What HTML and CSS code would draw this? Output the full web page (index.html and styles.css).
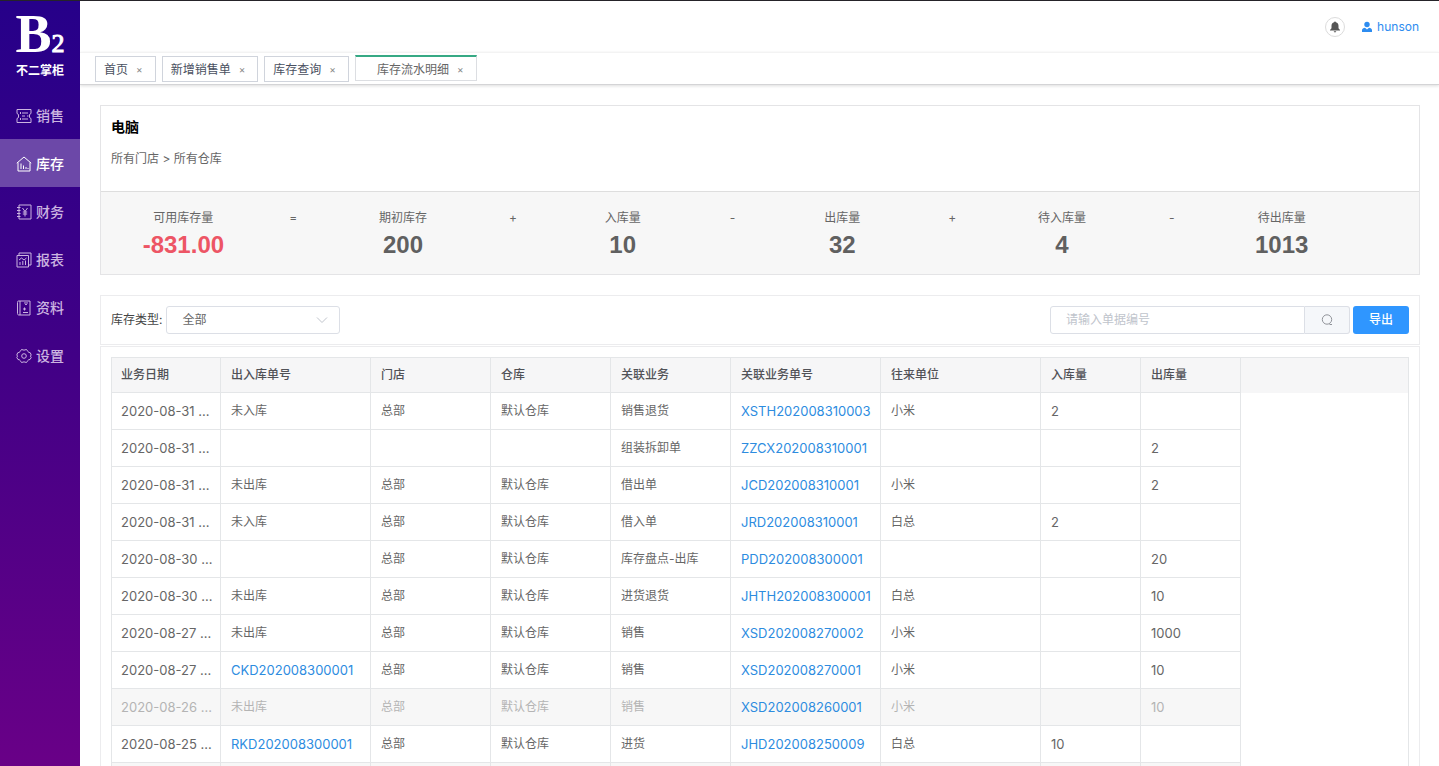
FILE: index.html
```html
<!DOCTYPE html>
<html lang="zh-CN">
<head>
  <meta charset="UTF-8">
  <title>库存流水明细</title>
  <link rel="stylesheet" href="styles.css">
</head>
<body>

<aside class="sidebar">
  <div class="logo">
    <div class="logo-mark">B<span>2</span></div>
    <div class="logo-name">不二掌柜</div>
  </div>
  <nav class="menu">
    <a href="#"><svg viewBox="0 0 16 16"><path d="M1 1.500h14v4l-1.500 1v3l1.500 1v4H1v-4l1.500-1v-3L1 5.500zM6 5h6M6 8h3M11 8h1.500M6 11h6M4.500 4v2M4.500 10v2"/></svg>销售</a>
    <a href="#" class="active"><svg viewBox="0 0 16 16"><path d="M.8 7.200L8 1l7.200 6.200M2 6.500V15h12V6.500M5 7.500V13M7.500 9.500V13M10 11v2M12 12v1"/></svg>库存</a>
    <a href="#"><svg viewBox="0 0 16 16"><path d="M3 1h12v14H3zM1 3.500h3.500M1 6.500h3.500M1 9.500h3.500M1 12.500h3.500M6.500 4L9 7.500 11.500 4M9 7.500V12.500M6.800 8h4.400M6.800 10h4.400"/></svg>财务</a>
    <a href="#"><svg viewBox="0 0 16 16"><path d="M1 3.500h11.500V15H1zM3 3.500V1h12v12h-2.500M3 8l2.500-2L8 8l2.500-2M4 10v3M6.800 9v4M9.500 8.500V13"/></svg>报表</a>
    <a href="#"><svg viewBox="0 0 16 16"><path d="M4 1h10v14H4zM4 1H2.500C1.500 1 1.500 2 1.500 2.500v11c0 1 .5 1.500 1.500 1.500h1M9 2v1.500l1 1.500 1-1.500V2M7 9h3M8.500 7.500v3M7 12.500h5"/></svg>资料</a>
    <a href="#"><svg viewBox="0 0 16 16"><path d="M5.500 1.500Q8 2.800 10.500 1.500L12 3.700Q12.600 4.500 14.300 4.800L15.200 7Q13.700 8 15.200 9.500L14 11.500Q12.300 11.600 11.800 12.500L10.500 14.500Q8 13.200 5.500 14.500L4.200 12.500Q3.700 11.600 2 11.500L.8 9.500Q2.300 8 .8 7L1.700 4.800Q3.400 4.500 4 3.700z" stroke-linejoin="round"/><circle cx="8" cy="8" r="2.300"/></svg>设置</a>
  </nav>
</aside>

<div class="main">
  <header class="topbar">
    <button class="bell" aria-label="通知"><svg viewBox="0 0 12 12"><path d="M6 .5c.6 0 .9.4.9.8C8.600 1.700 9.500 3 9.500 4.800v2.400L11 9v.6H1V9l1.500-1.800V4.800C2.500 3 3.400 1.700 5.100 1.300c0-.4.300-.8.900-.8zM4.800 10.300h2.400c0 .7-.5 1.200-1.200 1.200s-1.200-.5-1.200-1.200z"/></svg></button>
    <a href="#" class="user"><svg viewBox="0 0 12 12"><circle cx="6" cy="3.500" r="2.700"/><path d="M1 11V9c0-1.300 1.500-2 3-2.300L6 8.500l2-1.800c1.500.3 3 1 3 2.300v2z"/></svg>hunson</a>
  </header>

  <nav class="tabs">
    <a href="#">首页<i>×</i></a>
    <a href="#">新增销售单<i>×</i></a>
    <a href="#">库存查询<i>×</i></a>
    <a href="#" class="current">库存流水明细<i>×</i></a>
  </nav>

  <div class="content">
    <section class="summary">
      <div class="summary-head">
        <h1>电脑</h1>
        <p>所有门店 &gt; 所有仓库</p>
      </div>
      <div class="stats">
        <div class="stat minus">可用库存量<strong>-831.00</strong></div>
        <div class="sign">=</div>
        <div class="stat">期初库存<strong>200</strong></div>
        <div class="sign">+</div>
        <div class="stat">入库量<strong>10</strong></div>
        <div class="sign">-</div>
        <div class="stat">出库量<strong>32</strong></div>
        <div class="sign">+</div>
        <div class="stat">待入库量<strong>4</strong></div>
        <div class="sign">-</div>
        <div class="stat">待出库量<strong>1013</strong></div>
      </div>
    </section>

    <form class="filter">
      <label for="type">库存类型:</label>
      <select id="type"><option>全部</option></select>
      <div class="search">
        <input type="text" aria-label="单据编号" placeholder="请输入单据编号">
        <button type="button" class="search-btn" aria-label="搜索"><svg viewBox="0 0 12 12"><circle cx="6" cy="5.500" r="4.700"/><path d="M8.500 10.500h2.500"/></svg></button>
      </div>
      <button type="button" class="export">导出</button>
    </form>

    <section class="list">
      <div class="table-wrap">
      <table>
        <colgroup>
          <col class="w110"><col class="w150"><col class="w120"><col class="w120"><col class="w120"><col class="w150"><col class="w160"><col class="w100"><col class="w100"><col>
        </colgroup>
        <thead>
          <tr><th>业务日期</th><th>出入库单号</th><th>门店</th><th>仓库</th><th>关联业务</th><th>关联业务单号</th><th>往来单位</th><th>入库量</th><th>出库量</th><th class="rest"></th></tr>
        </thead>
        <tbody>
          <tr><td class="num">2020-08-31 ...</td><td>未入库</td><td>总部</td><td>默认仓库</td><td>销售退货</td><td><a href="#">XSTH202008310003</a></td><td>小米</td><td class="num">2</td><td></td><td class="rest"></td></tr>
          <tr><td class="num">2020-08-31 ...</td><td></td><td></td><td></td><td>组装拆卸单</td><td><a href="#">ZZCX202008310001</a></td><td></td><td></td><td class="num">2</td><td class="rest"></td></tr>
          <tr><td class="num">2020-08-31 ...</td><td>未出库</td><td>总部</td><td>默认仓库</td><td>借出单</td><td><a href="#">JCD202008310001</a></td><td>小米</td><td></td><td class="num">2</td><td class="rest"></td></tr>
          <tr><td class="num">2020-08-31 ...</td><td>未入库</td><td>总部</td><td>默认仓库</td><td>借入单</td><td><a href="#">JRD202008310001</a></td><td>白总</td><td class="num">2</td><td></td><td class="rest"></td></tr>
          <tr><td class="num">2020-08-30 ...</td><td></td><td>总部</td><td>默认仓库</td><td>库存盘点-出库</td><td><a href="#">PDD202008300001</a></td><td></td><td></td><td class="num">20</td><td class="rest"></td></tr>
          <tr><td class="num">2020-08-30 ...</td><td>未出库</td><td>总部</td><td>默认仓库</td><td>进货退货</td><td><a href="#">JHTH202008300001</a></td><td>白总</td><td></td><td class="num">10</td><td class="rest"></td></tr>
          <tr><td class="num">2020-08-27 ...</td><td>未出库</td><td>总部</td><td>默认仓库</td><td>销售</td><td><a href="#">XSD202008270002</a></td><td>小米</td><td></td><td class="num">1000</td><td class="rest"></td></tr>
          <tr><td class="num">2020-08-27 ...</td><td><a href="#">CKD202008300001</a></td><td>总部</td><td>默认仓库</td><td>销售</td><td><a href="#">XSD202008270001</a></td><td>小米</td><td></td><td class="num">10</td><td class="rest"></td></tr>
          <tr class="void"><td class="num">2020-08-26 ...</td><td>未出库</td><td>总部</td><td>默认仓库</td><td>销售</td><td><a href="#">XSD202008260001</a></td><td>小米</td><td></td><td class="num">10</td><td class="rest"></td></tr>
          <tr><td class="num">2020-08-25 ...</td><td><a href="#">RKD202008300001</a></td><td>总部</td><td>默认仓库</td><td>进货</td><td><a href="#">JHD202008250009</a></td><td>白总</td><td class="num">10</td><td></td><td class="rest"></td></tr>
          <tr class="void"><td></td><td></td><td></td><td></td><td></td><td></td><td></td><td></td><td></td><td class="rest"></td></tr>
        </tbody>
      </table>
      </div>
    </section>
  </div>
</div>

</body>
</html>
```
FILE: styles.css
```css
* { box-sizing: border-box; }
body {
  margin: 0; height: 100vh; display: flex; overflow: hidden;
  border-top: 1px solid #252329; background: #fff; color: #666;
  font: 12px/18px Inter, "Noto Sans CJK SC", sans-serif;
}
a { color: #2d8cdf; text-decoration: none; }
button, input, select { font: inherit; margin: 0; }

.sidebar {
  position: relative; z-index: 1; width: 80px; flex: none; color: #fff;
  background: linear-gradient(#260089, #400086 45%, #690087);
}
.logo { height: 90px; padding-top: 4px; text-align: center; }
.logo-mark { font: bold 54px/58px "Liberation Serif", serif; }
.logo-mark span { font-size: 26px; line-height: 0; font-weight: normal; -webkit-text-stroke: 1px #fff; }
.logo-name { font-size: 12px; line-height: 16px; font-weight: bold; }
.menu a {
  display: flex; align-items: center; gap: 4px; height: 48px; padding: 1px 0 0 16px;
  color: #cbb4e0; font-size: 14px; font-weight: 500;
}
.menu a.active { background: #6c48a8; color: #fff; }
.menu svg { width: 16px; height: 16px; fill: none; stroke: currentColor; }

.main { flex: 1; min-width: 0; display: flex; flex-direction: column; }
.topbar {
  height: 51px; flex: none; display: flex; align-items: center; justify-content: flex-end;
  gap: 16px; padding-right: 20px;
}
.bell {
  width: 20px; height: 20px; padding: 3px; border: 1px solid #dcdcdc; border-radius: 50%; background: #fff;
}
.bell svg { display: block; width: 12px; height: 12px; fill: #555; }
.user { display: flex; align-items: center; gap: 4px; color: #2d8cf0; }
.user svg { width: 12px; height: 12px; fill: currentColor; }

.tabs {
  height: 33px; flex: none; display: flex; align-items: flex-start; gap: 6px; padding: 3px 15px;
  border-top: 1px solid #f3f3f3; border-bottom: 1px solid #d4d4d6; box-shadow: 0 1px 3px #ddd;
}
.tabs a {
  height: 26px; padding: 0 12px 0 8px; border: 1px solid #d0d4dc; color: #495060; line-height: 26px;
}
.tabs i {
  display: inline-block; margin-left: 8px; vertical-align: 1px;
  font-style: normal; font-size: 10px; line-height: 20px; color: #888;
}
.tabs .current {
  margin-top: -1px; padding-left: 21px; border-color: #dcdee2; border-top: 2px solid #36a984; color: #666;
}

.content { flex: 1; padding: 20px 19px 0 20px; overflow: hidden; }
.summary { border: 1px solid #e4e4e6; }
.summary-head { height: 86px; padding: 12px 10px; border-bottom: 1px solid #dedede; }
h1 { margin: 0 0 14px; color: #000; font-size: 14px; line-height: 18px; }
p { margin: 0; }
.stats {
  height: 82px; padding-top: 17px; background: #f7f7f7; text-align: center;
  display: grid; grid-template-columns: repeat(6, 3fr 1fr);
}
.stat strong {
  display: block; color: #606060; font: bold 24px/36px "Liberation Sans", Arial, sans-serif;
}
.stat.minus strong { color: #ed5565; }

.filter {
  display: flex; align-items: center; height: 50px; margin-top: 20px; padding: 0 10px;
  border: 1px solid #ececee;
}
.filter label { margin-right: 4px; color: #444; }
select {
  width: 174px; height: 28px; padding: 0 15px; border: 1px solid #dcdfe6; border-radius: 3px;
  color: #666; appearance: none;
  background: #fff url("data:image/svg+xml,%3Csvg xmlns='http://www.w3.org/2000/svg' viewBox='0 0 12 12' fill='none' stroke='%23c0c4cc'%3E%3Cpath d='M1 3.500l5 5 5-5'/%3E%3C/svg%3E") no-repeat right 11px center / 12px;
}
.search { display: flex; width: 300px; height: 28px; margin-left: auto; margin-right: 3px; }
.search input {
  flex: 1; min-width: 0; padding: 0 15px; border: 1px solid #dcdfe6; border-radius: 3px 0 0 3px;
}
.search input::placeholder { color: #c0c4cc; }
.search-btn {
  width: 45px; padding: 0; border: 1px solid #dcdfe6; border-left: 0; border-radius: 0 3px 3px 0; background: #f5f7fa;
}
.search-btn svg { display: block; width: 12px; height: 12px; margin: auto; fill: none; stroke: #909399; }
.export {
  width: 56px; height: 28px; padding: 0; border: 0; border-radius: 3px; background: #2f96ff; color: #fff; font-weight: 500;
}

.list { margin-top: 1px; padding: 10px; border: 1px solid #ececee; }
.table-wrap { border: 1px solid #e4e6e8; border-bottom: 0; }
table { width: 100%; table-layout: fixed; border-collapse: separate; border-spacing: 0; }
.w100 { width: 100px; }
.w110 { width: 109px; }
.w120 { width: 120px; }
.w150 { width: 150px; }
.w160 { width: 160px; }
th, td {
  height: 37px; padding: 0 9px; border-right: 1px solid #e4e6e8; border-bottom: 1px solid #e4e6e8;
  text-align: left; white-space: nowrap;
}
th + th, td + td { padding-left: 10px; }
th { height: 35px; background: #f6f6f7; color: #515257; font-weight: 500; }
th.rest, td.rest { border: 0; }
.num, td a { font-size: 13px; }
td:first-child { padding-right: 0; }
.void td { background: #f7f7f7; color: #b4b4b4; }
.void td.rest { background: none; }
```
